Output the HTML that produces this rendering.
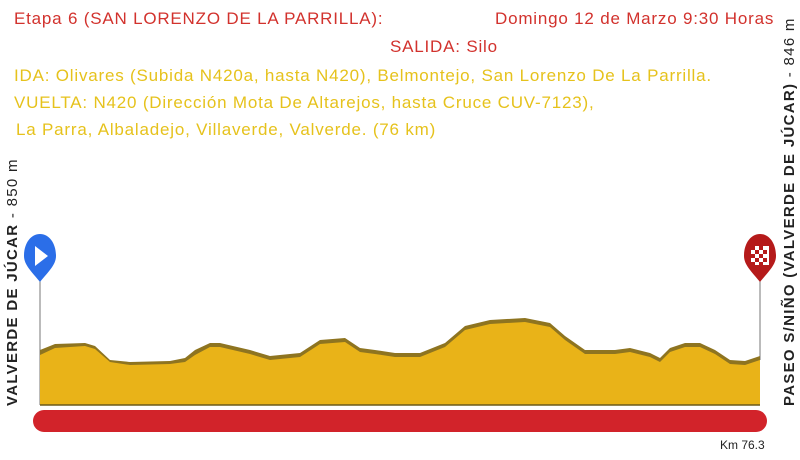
<html><head><style>
body{margin:0;width:800px;height:460px;background:#fff;position:relative;overflow:hidden;font-family:"Liberation Sans",sans-serif}
.t{position:absolute;font-size:17px;letter-spacing:0.8px;white-space:nowrap}
.r{color:#d2322d}.y{color:#e6c21c}
.v{position:absolute;font-size:15px;letter-spacing:1.3px;font-weight:bold;color:#222;white-space:nowrap;transform-origin:0 0}
</style></head><body>
<div class="t r" style="left:14px;top:9px">Etapa 6 (SAN LORENZO DE LA PARRILLA):</div>
<div class="t r" style="left:495px;top:9px">Domingo 12 de Marzo 9:30 Horas</div>
<div class="t r" style="left:390px;top:37px">SALIDA: Silo</div>
<div class="t y" style="left:14px;top:66px">IDA: Olivares (Subida N420a, hasta N420), Belmontejo, San Lorenzo De La Parrilla.</div>
<div class="t y" style="left:14px;top:93px">VUELTA: N420 (Dirección Mota De Altarejos, hasta Cruce CUV-7123),</div>
<div class="t y" style="left:16px;top:120px">La Parra, Albaladejo, Villaverde, Valverde. (76 km)</div>
<div class="v" style="left:4px;top:406px;transform:rotate(-90deg)">VALVERDE DE JÚCAR <span style="font-weight:normal">- 850 m</span></div>
<div class="v" style="left:781px;top:406px;transform:rotate(-90deg)">PASEO S/NIÑO (VALVERDE DE JÚCAR) <span style="font-weight:normal">- 846 m</span></div>
<svg width="800" height="460" style="position:absolute;left:0;top:0">
<line x1="40" y1="280" x2="40" y2="405" stroke="#777" stroke-width="1"/>
<line x1="760" y1="280" x2="760" y2="360" stroke="#777" stroke-width="1"/>
<path d="M40 350 L55 344 L85 343 L95 346 L110 360 L130 362 L170 361 L185 358 L195 350 L210 343 L220 343 L250 350 L270 356 L300 353 L320 340 L345 338 L360 348 L375 350 L395 353 L420 353 L445 343 L465 326 L490 320 L525 318 L550 323 L565 336 L585 350 L615 350 L630 348 L650 353 L660 358 L670 348 L685 343 L700 343 L715 350 L730 360 L745 361 L760 356 L760 405 L40 405Z" fill="#8e7420"/>
<path d="M40 355 L55 348 L85 346 L95 349 L110 362 L130 365 L170 364 L185 362 L195 355 L210 347 L220 347 L250 354 L270 360 L300 357 L320 344 L345 342 L360 352 L375 354 L395 357 L420 357 L445 347 L465 330 L490 324 L525 322 L550 327 L565 340 L585 354 L615 354 L630 352 L650 357 L660 362 L670 352 L685 347 L700 347 L715 354 L730 364 L745 365 L760 360 L760 405 L40 405Z" fill="#e9b318"/>
<line x1="40" y1="405" x2="760" y2="405" stroke="#6b5a1c" stroke-width="1.5"/>
<rect x="33" y="410" width="734" height="22" rx="11" fill="#d2232a"/>
<path d="M40 282 C32 272 24 265 24 256 C24 243 31 234 40 234 C49 234 56 243 56 256 C56 265 48 272 40 282Z" fill="#2b6ee8"/>
<path d="M35 246 L48 256 L35 266Z" fill="#fff"/>
<path d="M760 282 C752 272 744 265 744 256 C744 243 751 234 760 234 C769 234 776 243 776 256 C776 265 768 272 760 282Z" fill="#b51a1a"/>
<g fill="#fff"><rect x="751" y="246" width="18" height="19"/></g>
<g fill="#b51a1a"><rect x="751" y="246" width="4" height="4"/><rect x="759" y="246" width="4" height="4"/><rect x="755" y="250" width="4" height="4"/><rect x="763" y="250" width="4" height="4"/><rect x="751" y="254" width="4" height="4"/><rect x="759" y="254" width="4" height="4"/><rect x="755" y="258" width="4" height="4"/><rect x="763" y="258" width="4" height="4"/><rect x="751" y="262" width="4" height="3"/><rect x="759" y="262" width="4" height="3"/></g>
<text x="720" y="449" font-size="12" font-family="Liberation Sans" fill="#222">Km 76.3</text>
</svg>
</body></html>
